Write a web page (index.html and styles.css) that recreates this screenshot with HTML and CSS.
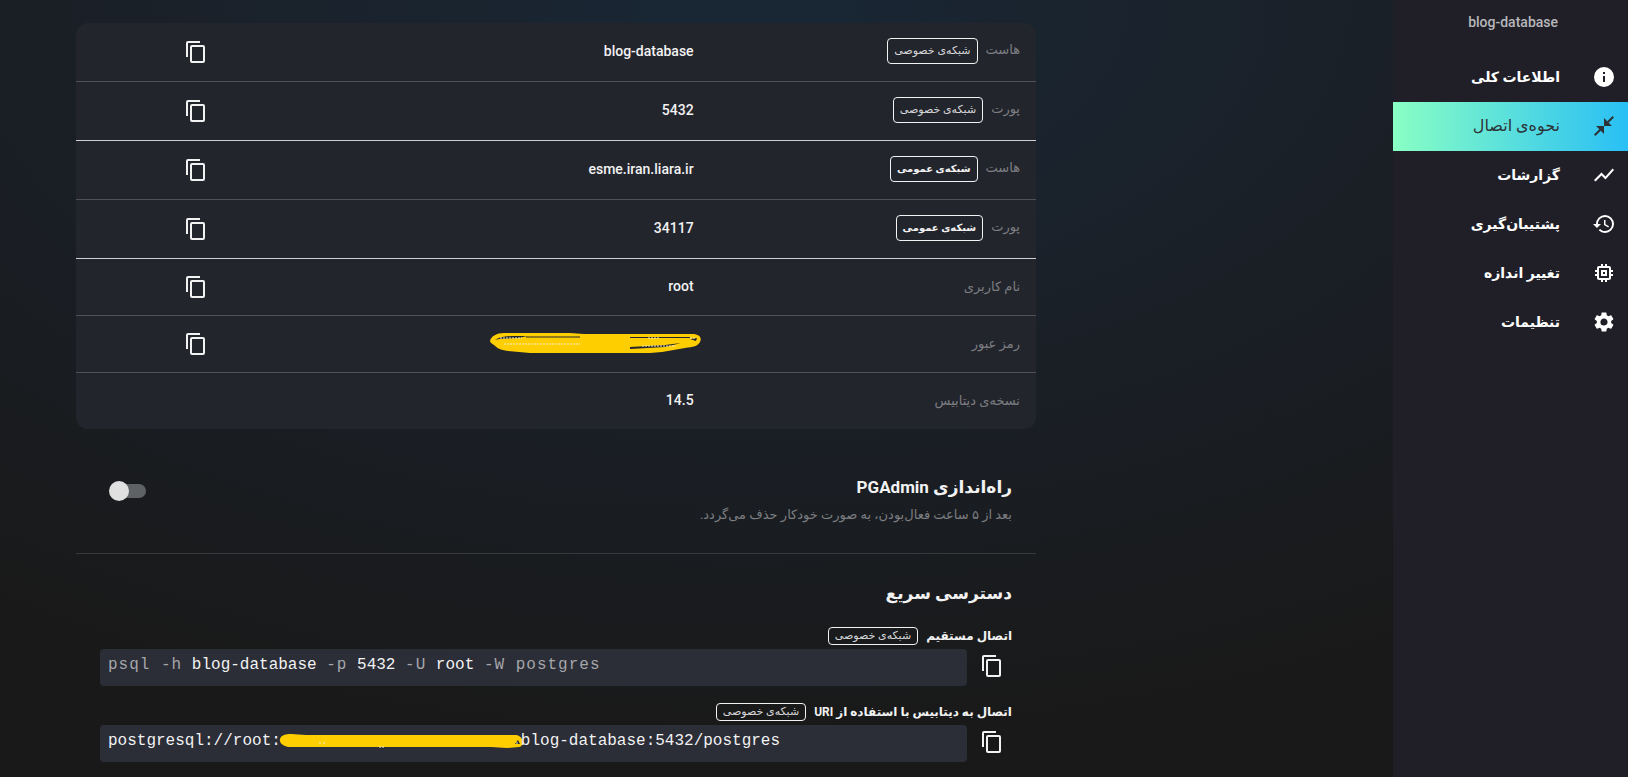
FILE: index.html
```html
<!DOCTYPE html>
<html lang="fa" dir="rtl">
<head>
<meta charset="utf-8">
<meta name="viewport" content="width=device-width, initial-scale=1">
<title>blog-database</title>
<link rel="stylesheet" href="styles.css">
</head>
<body>
<svg class="sprite" aria-hidden="true">
  <symbol id="copy" viewBox="0 0 24 24"><path d="M16 1H4a2 2 0 0 0-2 2v14h2V3h12zm3 4H8a2 2 0 0 0-2 2v14a2 2 0 0 0 2 2h11a2 2 0 0 0 2-2V7a2 2 0 0 0-2-2zm0 16H8V7h11z"/></symbol>
</svg>
<div class="layout">
  <aside class="sidebar">
    <div class="project" dir="ltr">blog-database</div>
    <nav class="menu">
      <a class="menu-item" href="#info"><svg class="icon" viewBox="0 0 24 24"><path d="M12 2a10 10 0 1 0 0 20 10 10 0 0 0 0-20zm1 15h-2v-6h2zm0-8h-2V7h2z"/></svg><span>اطلاعات کلی</span></a>
      <a class="menu-item active" href="#connect" aria-current="page"><svg class="icon" viewBox="0 0 24 24"><path d="M22 3.41 16.71 8.7 20 12h-8V4l3.29 3.29L20.59 2zM3.41 22l5.29-5.29L12 20v-8H4l3.29 3.29L2 20.59z"/></svg><span>نحوه‌ی اتصال</span></a>
      <a class="menu-item" href="#reports"><svg class="icon" viewBox="0 0 24 24"><path d="m3.5 18.49 6-6.01 4 4L22 6.92l-1.41-1.41-7.09 7.97-4-4L2 16.99z"/></svg><span>گزارشات</span></a>
      <a class="menu-item" href="#backup"><svg class="icon" viewBox="0 0 24 24"><path d="M13 3a9 9 0 0 0-9 9H1l3.89 3.89.07.14L9 12H6c0-3.87 3.13-7 7-7s7 3.13 7 7-3.13 7-7 7c-1.93 0-3.68-.79-4.94-2.06l-1.42 1.42A8.954 8.954 0 0 0 13 21a9 9 0 0 0 0-18zm-1 5v5l4.28 2.54.72-1.21-3.5-2.08V8z"/></svg><span>پشتیبان‌گیری</span></a>
      <a class="menu-item" href="#resize"><svg class="icon" viewBox="0 0 24 24"><path d="M15 9H9v6h6zm-2 4h-2v-2h2zm8-2V9h-2V7c0-1.100-.9-2-2-2h-2V3h-2v2h-2V3H9v2H7c-1.100 0-2 .9-2 2v2H3v2h2v2H3v2h2v2c0 1.100.9 2 2 2h2v2h2v-2h2v2h2v-2h2c1.100 0 2-.9 2-2v-2h2v-2h-2v-2zm-4 6H7V7h10z"/></svg><span>تغییر اندازه</span></a>
      <a class="menu-item" href="#settings"><svg class="icon" viewBox="0 0 24 24"><path d="M19.140 12.940c.04-.3.06-.61.06-.94s-.02-.64-.07-.94l2.030-1.580a.49.490 0 0 0 .12-.61l-1.920-3.320a.488.488 0 0 0-.59-.22l-2.390.96c-.5-.38-1.030-.7-1.620-.94l-.36-2.540a.484.484 0 0 0-.48-.41h-3.840c-.24 0-.43.170-.47.410l-.36 2.540c-.59.240-1.130.570-1.620.940l-2.390-.96c-.22-.08-.47 0-.59.220L2.740 8.870c-.12.210-.08.470.12.610l2.030 1.580c-.05.3-.09.630-.09.940s.02.640.07.940l-2.030 1.580a.49.490 0 0 0-.12.610l1.920 3.320c.12.220.370.290.59.220l2.390-.96c.5.380 1.030.7 1.620.940l.36 2.540c.05.240.240.410.480.410h3.840c.24 0 .44-.17.470-.41l.36-2.540c.59-.24 1.130-.56 1.620-.94l2.390.96c.22.080.47 0 .59-.22l1.920-3.320c.12-.22.070-.47-.12-.61zM12 15.600A3.610 3.610 0 0 1 8.400 12c0-1.980 1.620-3.600 3.600-3.600s3.600 1.620 3.600 3.600-1.620 3.600-3.600 3.600z"/></svg><span>تنظیمات</span></a>
    </nav>
  </aside>

  <main class="main">
    <div class="content">
      <table class="details">
        <colgroup><col class="col-label"><col class="col-value"><col class="col-copy"></colgroup>
        <tbody>
          <tr class="tall"><th scope="row"><span class="label">هاست</span><span class="badge">شبکه‌ی خصوصی</span></th><td><bdi>blog-database</bdi></td><td class="copy-cell"><button class="copy" aria-label="کپی"><svg class="icon"><use href="#copy"/></svg></button></td></tr>
          <tr class="tall group-end"><th scope="row"><span class="label">پورت</span><span class="badge">شبکه‌ی خصوصی</span></th><td>5432</td><td class="copy-cell"><button class="copy" aria-label="کپی"><svg class="icon"><use href="#copy"/></svg></button></td></tr>
          <tr class="tall"><th scope="row"><span class="label">هاست</span><span class="badge strong">شبکه‌ی عمومی</span></th><td><bdi>esme.iran.liara.ir</bdi></td><td class="copy-cell"><button class="copy" aria-label="کپی"><svg class="icon"><use href="#copy"/></svg></button></td></tr>
          <tr class="tall group-end"><th scope="row"><span class="label">پورت</span><span class="badge strong">شبکه‌ی عمومی</span></th><td>34117</td><td class="copy-cell"><button class="copy" aria-label="کپی"><svg class="icon"><use href="#copy"/></svg></button></td></tr>
          <tr><th scope="row"><span class="label">نام کاربری</span></th><td>root</td><td class="copy-cell"><button class="copy" aria-label="کپی"><svg class="icon"><use href="#copy"/></svg></button></td></tr>
          <tr><th scope="row"><span class="label">رمز عبور</span></th><td><svg class="mask-wide" viewBox="0 0 212 22" aria-hidden="true"><path class="ink" d="M0 9C1 4 7 1 14 1L80 1 94 2H202C210 2 212 6 210 10 208 14 203 15 195 16L172 20 160 21H40L18 19C10 18 7 16 4 13 1 11 0 10 0 9z"/><path class="gap" d="M5 8q5-4 18-4l14 0-8 2-20 1zM36 4.500h54v1H36zM140 15l35-2 16-2-16 4-35 2zM140 5h60v1h-60zM200 7l7-1-1 3z"/><path class="specks" d="M10 6h22M14 12h76M152 14h34M158 6h12M200 6h5"/></svg></td><td class="copy-cell"><button class="copy" aria-label="کپی"><svg class="icon"><use href="#copy"/></svg></button></td></tr>
          <tr><th scope="row"><span class="label">نسخه‌ی دیتابیس</span></th><td>14.5</td><td></td></tr>
        </tbody>
      </table>

      <section class="pgadmin">
        <div>
          <h2 class="title"><label for="pgadmin">راه‌اندازی PGAdmin</label></h2>
          <p class="hint">بعد از ۵ ساعت فعال‌بودن، به صورت خودکار حذف می‌گردد.</p>
        </div>
        <input class="switch" id="pgadmin" type="checkbox" role="switch">
      </section>

      <section class="quick">
        <h2 class="title">دسترسی سریع</h2>
        <div class="access">
          <div class="access-head"><h3>اتصال مستقیم</h3><span class="badge small">شبکه‌ی خصوصی</span></div>
          <div class="access-row"><button class="copy" aria-label="کپی"><svg class="icon"><use href="#copy"/></svg></button><code class="code" dir="ltr"><span class="flag">psql -h</span> blog-database <span class="flag">-p</span> 5432 <span class="flag">-U</span> root <span class="flag">-W postgres</span></code></div>
        </div>
        <div class="access">
          <div class="access-head"><h3>اتصال به دیتابیس با استفاده از URI</h3><span class="badge small">شبکه‌ی خصوصی</span></div>
          <div class="access-row"><button class="copy" aria-label="کپی"><svg class="icon"><use href="#copy"/></svg></button><code class="code" dir="ltr">postgresql://root:<svg class="mask-inline" viewBox="0 0 240 14" aria-hidden="true"><path class="ink" d="M-1 5C0 1 5 0 10 0L25 1H235C243 2 244 12 238 13L226 14 210 13H8C2 12-2 9-1 5z"/><path class="gap" d="M234 10l3-4 2 4z"/><path class="specks" d="M38 9h3M42 9h3M98 13h6M235 9h3"/></svg>blog-database:5432/postgres</code></div>
        </div>
      </section>
    </div>
  </main>
</div>
</body>
</html>
```
FILE: styles.css
```css
* { box-sizing: border-box; }

body {
  margin: 0;
  min-height: 100vh;
  color: #f2f2f2;
  font-family: Roboto, "DejaVu Sans", sans-serif;
  font-size: 14px;
  line-height: 20px;
  background: radial-gradient(ellipse 80% 95% at 46% 0, #192735 0%, #1a1f26 55%, #191919 100%) #191919;
}

h2, h3, p { margin: 0; }
button { padding: 0; border: 0; background: none; color: inherit; cursor: pointer; }
.sprite { display: none; }
.icon { display: block; width: 24px; height: 24px; fill: currentColor; }

.layout { display: flex; min-height: 100vh; }

.sidebar { flex: 0 0 235px; background: #201f28; }
.project {
  padding: 12px 70px 21px 0;
  text-align: right;
  color: #b7b7ba;
  font-weight: 500;
}
.menu-item {
  display: flex;
  align-items: center;
  gap: 32px;
  height: 49px;
  padding: 0 12px 2px;
  color: #fff;
  font-weight: 700;
  text-decoration: none;
}
.menu-item.active {
  color: #2c3338;
  font-size: 16px;
  font-weight: 400;
  background: linear-gradient(to left, #29bff5, #89ffc4);
}

.main { flex: 1; min-width: 0; padding: 23px 76px 0; }
.content { max-width: 960px; margin-right: auto; }

.details {
  width: 100%;
  table-layout: fixed;
  border-spacing: 0;
  border-radius: 12px;
  overflow: hidden;
  background: #23252d;
}
.col-label { width: 34%; }
.col-value { width: 41%; }
.col-copy { width: 25%; }
.details th, .details td {
  height: 57px;
  padding: 0 16px 2px;
  border-bottom: 1px solid #505154;
  text-align: right;
  vertical-align: middle;
  white-space: nowrap;
}
.details td { font-weight: 500; }
.details .tall th, .details .tall td { height: 59px; }
.details .group-end th, .details .group-end td { border-color: #d0d0d1; }
.details tr:last-child th, .details tr:last-child td { height: 56px; border-bottom: 0; }
.label { color: #7d7e82; font-size: 13px; font-weight: 400; }
.details .copy-cell { padding-bottom: 0; }
.details .copy-cell .copy { display: block; margin: 0 auto; }

.badge {
  display: inline-block;
  margin-right: 8px;
  padding: 0 6px;
  border: 1px solid #f2f2f2;
  border-radius: 4px;
  color: #d8d8da;
  font-size: 11px;
  font-weight: 400;
  line-height: 24px;
}
.badge.strong { color: #f2f2f2; font-size: 10px; font-weight: 700; }
.badge.small { line-height: 16px; }

.ink { fill: #ffce00; }
.gap { fill: #23252d; }
.specks { fill: none; stroke: #f4efd0; stroke-dasharray: 2 1; }
.mask-wide { display: block; width: 212px; height: 22px; margin-right: -8px; }
.mask-inline { width: 240px; height: 14px; overflow: visible; vertical-align: -3px; }

.pgadmin {
  display: flex;
  align-items: flex-start;
  justify-content: space-between;
  padding: 44px 24px 28px 33px;
  border-bottom: 1px solid #36383b;
}
.title { font-size: 17px; font-weight: 700; line-height: 28px; }
.hint { margin-top: 4px; color: #7c7e81; font-size: 13px; line-height: 20px; }

.switch {
  appearance: none;
  position: relative;
  width: 37px;
  height: 20px;
  margin: 8px 0 0;
  cursor: pointer;
}
.switch::before {
  content: "";
  position: absolute;
  inset: 3px 0 3px 7px;
  border-radius: 7px;
  background: #5f6265;
}
.switch::after {
  content: "";
  position: absolute;
  top: 0;
  left: 0;
  width: 20px;
  height: 20px;
  border-radius: 50%;
  background: #e0e0e0;
}

.quick { padding: 25px 24px 0; }
.quick .title { margin-bottom: 19px; }
.access { margin-bottom: 16px; }
.access:last-child { margin-bottom: 0; }
.access-head { display: flex; align-items: center; height: 20px; margin-bottom: 3px; }
.access-head h3 { font-size: 12px; font-weight: 700; line-height: 20px; }
.access-row { display: flex; align-items: flex-start; gap: 13px; }
.access-row .copy { margin: 5px 8px 0 0; }
.code {
  flex: 1;
  min-width: 0;
  height: 37px;
  padding: 6px 8px;
  border-radius: 4px;
  background: #2b2d37;
  font-family: "Liberation Mono", monospace;
  font-size: 16px;
  line-height: 20px;
  white-space: pre;
  overflow: hidden;
}
.flag { color: #a5a6aa; letter-spacing: 1px; }
```
